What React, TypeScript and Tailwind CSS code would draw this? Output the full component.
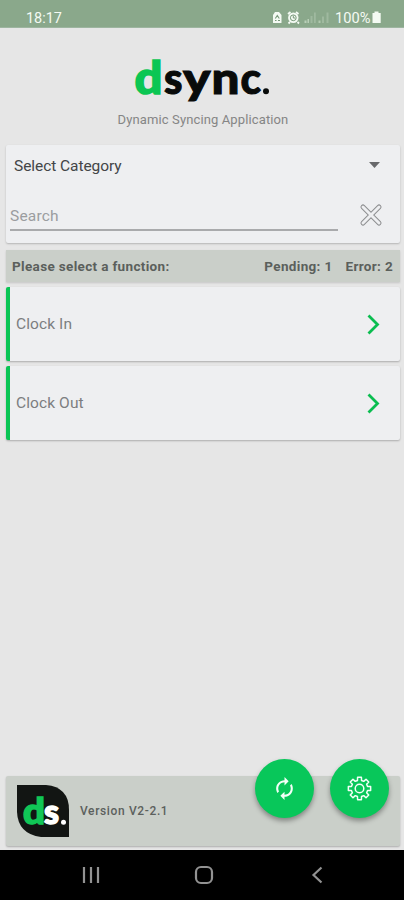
import { MdAutorenew } from "react-icons/md";

const gearPath = (() => {
  const points: string[] = [];
  for (let i = 0; i < 8; i++) {
    const base = (i * Math.PI) / 4 - Math.PI / 2;
    const corners: [number, number][] = [
      [-0.25, 8.3],
      [-0.17, 11.3],
      [0.17, 11.3],
      [0.25, 8.3],
    ];
    for (const [offset, r] of corners) {
      const a = base + offset;
      points.push(`${(12.5 + r * Math.cos(a)).toFixed(2)} ${(12.5 + r * Math.sin(a)).toFixed(2)}`);
    }
  }
  return `M${points.join("L")}Z`;
})();

function StatusBar() {
  return (
    <header className="flex h-7 shrink-0 items-end justify-between border-b border-[#9db5a0] bg-[#8aa88b] pr-[22px] pl-[25px] text-[#f4faf3]">
      <svg width="40" height="22" className="-mb-px overflow-visible">
        <text x="1" y="17" fontSize="14.500" textLength="36" lengthAdjust="spacingAndGlyphs" fill="currentColor">18:17</text>
      </svg>
      <svg width="112" height="22" viewBox="270 6 112 22" className="-mb-px" fill="currentColor">
        <path d="M273 22.500V15l2-3h4l2.500 3v7.500q0 .5-.5.5h-7.500q-.5 0-.5-.5Z" />
        <path d="m275.300 18.500 2-3 2 3M275 20.500h1.500m1.500 0h2" fill="none" stroke="#779879" strokeWidth="1.100" />
        <circle cx="293.300" cy="17.800" r="5.200" />
        <path d="m288 14 2.500-2m8 2-2.500-2m-6 10-1.500 1.500m9-1.500 1.500 1.500" stroke="currentColor" strokeWidth="1.800" />
        <circle cx="293.300" cy="17.800" r="2.900" fill="none" stroke="#779879" strokeWidth="1" />
        <path d="M293.300 15.500v2.500h2" fill="none" stroke="#779879" strokeWidth="1" />
        <g fill="#b9cfb8">
          <path d="M304.500 20.500h2v2.500h-2zM307.500 19h1.500v4h-1.500z" />
          <path opacity=".45" d="M310.500 16h2v7h-2zM314 12.500h1.800V23H314zM322 16.500h2V23h-2zM326.500 12.500h2V23h-2z" />
          <path opacity=".8" d="M318.500 20.500h2v2.500h-2z" />
        </g>
        <text x="335" y="23" fontSize="14.500" textLength="35.500" lengthAdjust="spacingAndGlyphs">100%</text>
        <path d="M374.500 11.500h4v1.500h2.200v10h-8.200V13h2z" />
      </svg>
    </header>
  );
}

function Brand() {
  return (
    <section className="flex h-[117px] shrink-0 flex-col items-center">
      <svg width="140" height="58" viewBox="133 48 140 58" className="mt-5 ml-[2px]" fontFamily="Lato" fontWeight="900">
        <text x="134.500" y="93.500" fontSize="46" textLength="28" lengthAdjust="spacingAndGlyphs" fill="#0bc653" stroke="#0bc653" strokeWidth="1.500">d</text>
        <g fill="#090b0a" stroke="#090b0a" strokeWidth="1" fontSize="43">
          <text x="164" y="93.500" textLength="18.500" lengthAdjust="spacingAndGlyphs">s</text>
          <text x="183" y="93.500" textLength="27.500" lengthAdjust="spacingAndGlyphs">y</text>
          <text x="211.500" y="93.500" textLength="28" lengthAdjust="spacingAndGlyphs">n</text>
          <text x="240.500" y="93.500" textLength="20.500" lengthAdjust="spacingAndGlyphs">c</text>
        </g>
        <circle cx="266" cy="91.300" r="3" fill="#090b0a" />
      </svg>
      <p className="mt-[6px] ml-[2px] text-[13px] leading-4 tracking-[0.12px] whitespace-nowrap text-[#858585]">Dynamic Syncing Application</p>
    </section>
  );
}

function FilterCard() {
  return (
    <section className="mr-1 ml-[6px] h-[98px] shrink-0 rounded-xs bg-[#eeeff1] shadow-[0_1px_2px_rgba(0,0,0,0.22)]">
      <div className="flex h-[42px] items-center justify-between pr-5 pl-2">
        <span className="pt-[2px] text-[15.500px] tracking-[-0.06px] text-[#434547]">Select Category</span>
        <svg width="11" height="6" className="-mt-0.5" fill="#68696b"><path d="M0 0h11L5.500 6Z" /></svg>
      </div>
      <div className="flex h-11 items-start justify-between pr-[17px] pl-1">
        <div className="flex h-[44px] w-[328px] items-end border-b-2 border-[#a9aaac] pb-[3px] text-[15.500px] leading-5 tracking-[0.2px] text-[#9b9da0]">Search</div>
        <svg width="24" height="24" className="mt-4" fill="none" strokeLinecap="round">
          <path d="m4 4 16 16M20 4 4 20" stroke="#8d8e90" strokeWidth="5" />
          <path d="m4 4 16 16M20 4 4 20" stroke="#eeeff1" strokeWidth="3" />
        </svg>
      </div>
    </section>
  );
}

function FunctionRow({ label }: { label: string }) {
  return (
    <button className="flex h-[74px] w-full shrink-0 items-center justify-between rounded-xs border-l-4 border-[#09c554] bg-[#eeeff1] pr-[20px] pl-[6px] text-left shadow-[0_1px_2px_rgba(0,0,0,0.25)]">
      <span className="pt-[2px] text-[15.500px] tracking-[0.1px] text-[#7c7e80]">{label}</span>
      <svg width="13" height="21" fill="none" stroke="#0abd50" strokeWidth="2.800"><path d="m1.500 1.500 9 9-9 9" /></svg>
    </button>
  );
}

function Footer() {
  return (
    <footer className="relative mr-1 ml-[6px] mb-1 flex h-[70px] shrink-0 items-center rounded-xs bg-[#cacfc9] pl-[11px] shadow-[0_1px_2px_rgba(0,0,0,0.25)]">
      <svg width="52" height="52" viewBox="0 0 52 52" className="-mt-px" fontFamily="Lato" fontWeight="900">
        <path d="M0 0h29Q52 2 52 25v27H24Q1 49 0 27Z" fill="#121513" />
        <text x="6" y="39" fontSize="36" textLength="22" lengthAdjust="spacingAndGlyphs" fill="#10c656" stroke="#10c656" strokeWidth="1.500">d</text>
        <text x="27" y="39" fontSize="34" textLength="15" lengthAdjust="spacingAndGlyphs" fill="white" stroke="white" strokeWidth="1.500">s</text>
        <circle cx="46.500" cy="37.300" r="2.500" fill="white" />
      </svg>
      <span className="ml-[11px] text-xs font-medium tracking-[0.63px] text-[#5c615d]">Version V2-2.1</span>
      <div className="absolute top-[-17px] right-[11px] flex gap-4 text-[#f3fff7]">
        <button className="flex size-[59px] items-center justify-center rounded-full bg-[#08c75a] shadow-[0_3px_5px_rgba(0,0,0,0.35)]">
          <MdAutorenew size={25} />
        </button>
        <button className="flex size-[59px] items-center justify-center rounded-full bg-[#08c75a] shadow-[0_3px_5px_rgba(0,0,0,0.35)]">
          <svg width="25" height="25" fill="none" stroke="currentColor" strokeWidth="1.500" strokeLinejoin="round">
            <path d={gearPath} />
            <circle cx="12.500" cy="12.500" r="4.300" />
          </svg>
        </button>
      </div>
    </footer>
  );
}

function NavigationBar() {
  return (
    <nav className="flex h-[50px] shrink-0 items-center bg-black pl-[82px]">
      <svg width="18" height="18" stroke="#929292" strokeWidth="2.200"><path d="M2 1v16M9 1v16M16 1v16" /></svg>
      <svg width="20" height="20" className="ml-[94px]" fill="none" stroke="#929292" strokeWidth="2.200"><rect x="2" y="2" width="16" height="16" rx="5" /></svg>
      <svg width="12" height="18" className="ml-[97px]" fill="none" stroke="#929292" strokeWidth="2.200"><path d="m10.500 1.500-8 7.500 8 7.500" /></svg>
    </nav>
  );
}

export default function App() {
  return (
    <div className="flex h-[900px] w-[404px] flex-col overflow-hidden bg-[#e6e6e6] font-[Roboto,sans-serif]">
      <StatusBar />
      <Brand />
      <FilterCard />
      <div className="mt-[7px] mr-1 ml-[6px] flex h-8 shrink-0 items-center bg-[#cacfc9] pt-px pr-[7px] pl-[6px] text-[13.500px] font-bold tracking-[0.34px] text-[#5b605c] shadow-[0_1px_2px_rgba(0,0,0,0.15)]">
        <span>Please select a function:</span>
        <span className="ml-auto">Pending: 1</span>
        <span className="ml-[13px]">Error: 2</span>
      </div>
      <main className="mt-[5px] mr-1 ml-[6px] flex flex-1 flex-col gap-[5px]">
        <FunctionRow label="Clock In" />
        <FunctionRow label="Clock Out" />
      </main>
      <Footer />
      <NavigationBar />
    </div>
  );
}
